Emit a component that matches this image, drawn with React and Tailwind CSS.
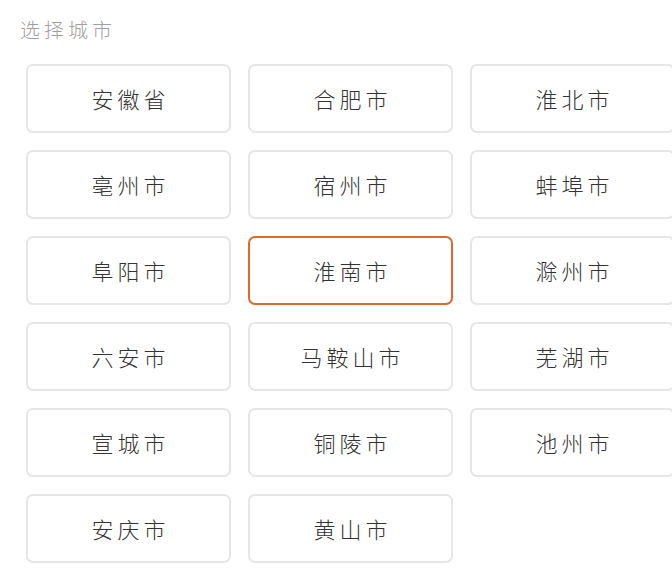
import React, { useState } from 'react';

const cities = [
    '安徽省', '合肥市', '淮北市',
    '亳州市', '宿州市', '蚌埠市',
    '阜阳市', '淮南市', '滁州市',
    '六安市', '马鞍山市', '芜湖市',
    '宣城市', '铜陵市', '池州市',
    '安庆市', '黄山市',
];

const App = () => {
    const [selected, setSelected] = useState('淮南市');

    return (
        <div className="w-[672px] h-[569px] overflow-hidden bg-white font-['Noto_Sans_CJK_SC','Noto_Sans',sans-serif] font-light">
            <div className="pl-[20px] pt-[16px] h-[64px] text-[20px] leading-[28px] tracking-[4px] text-[#a0a0a0]">
                选择城市
            </div>
            <div className="pl-[26px] grid grid-cols-[205px_205px_205px] gap-x-[17px] gap-y-[17px]">
                {cities.map((city) => (
                    <button
                        key={city}
                        onClick={() => setSelected(city)}
                        className={`h-[69px] rounded-[7px] border-2 bg-white flex items-center justify-center text-[22px] tracking-[4px] pl-[4px] text-[#333333] ${selected === city ? 'border-[#e0692a]' : 'border-[#e6e6e6]'}`}
                    >
                        {city}
                    </button>
                ))}
            </div>
        </div>
    );
};

export default App;
